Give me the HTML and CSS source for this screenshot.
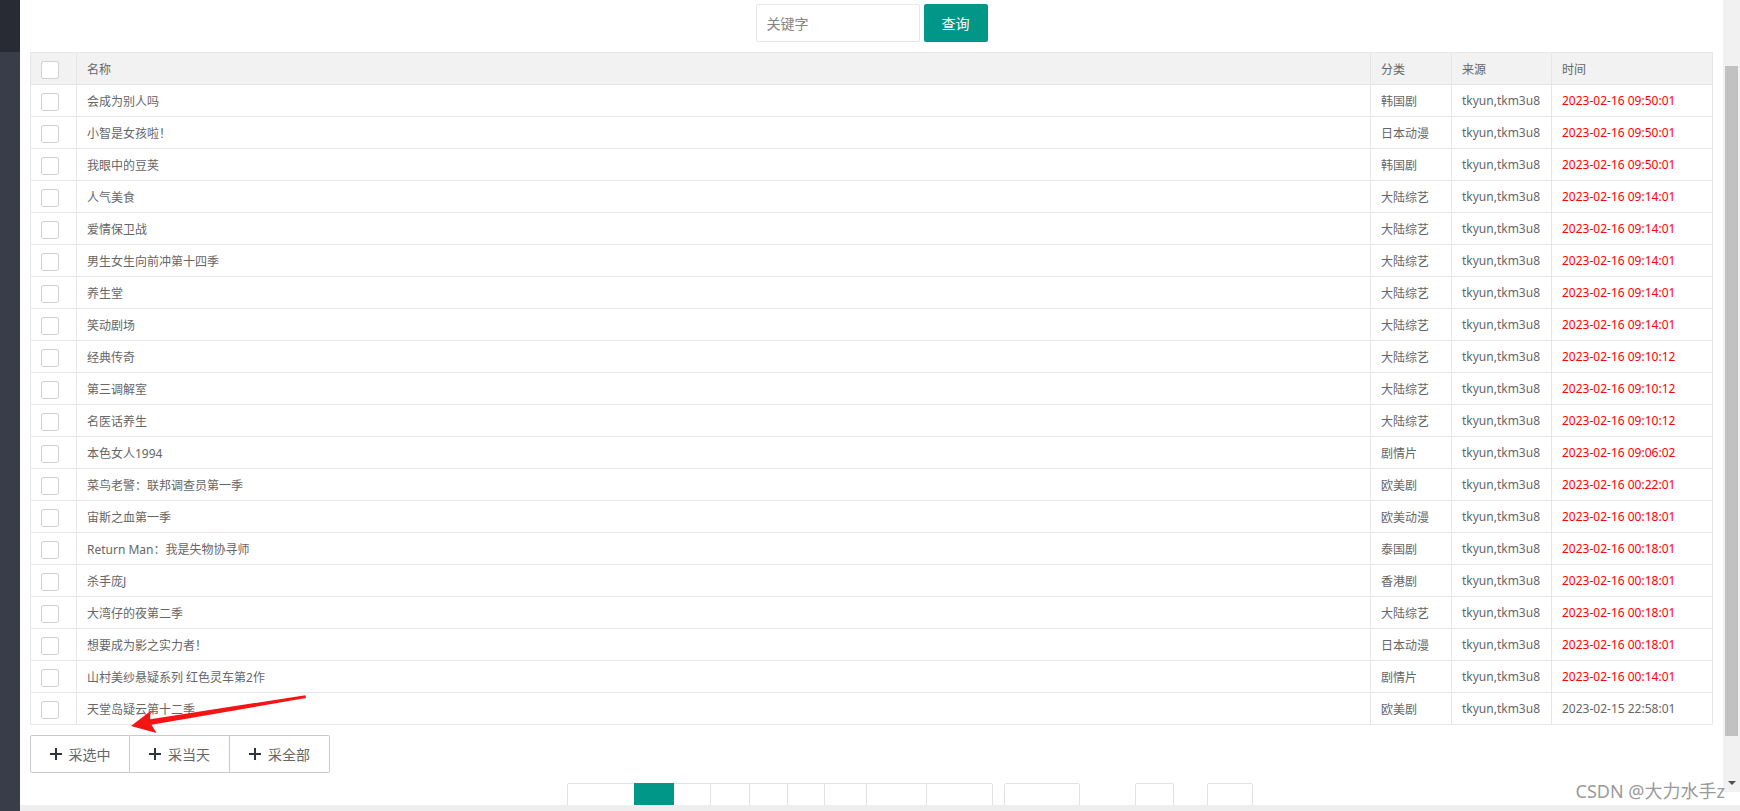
FILE: index.html
```html
<!DOCTYPE html>
<html lang="zh-CN">
<head>
    <meta charset="UTF-8">
    <title>采集列表</title>
    <link rel="stylesheet" href="styles.css">
</head>
<body>
    <div class="side"><div class="side-top"></div></div>

    <div class="wrap">
        <div class="view">
            <div class="main">
                <div class="search">
                    <input type="text" class="search-input" placeholder="关键字">
                    <button class="search-btn">查询</button>
                </div>

                <table class="grid">
                    <thead>
                        <tr>
                            <th class="col-check"><span class="check"></span></th>
                            <th>名称</th>
                            <th class="col-type">分类</th>
                            <th class="col-src">来源</th>
                            <th class="col-time">时间</th>
                        </tr>
                    </thead>
                    <tbody>
                        <tr><td><span class="check"></span></td><td>会成为别人吗</td><td>韩国剧</td><td>tkyun,tkm3u8</td><td class="new">2023-02-16 09:50:01</td></tr>
                        <tr><td><span class="check"></span></td><td>小智是女孩啦！</td><td>日本动漫</td><td>tkyun,tkm3u8</td><td class="new">2023-02-16 09:50:01</td></tr>
                        <tr><td><span class="check"></span></td><td>我眼中的豆荚</td><td>韩国剧</td><td>tkyun,tkm3u8</td><td class="new">2023-02-16 09:50:01</td></tr>
                        <tr><td><span class="check"></span></td><td>人气美食</td><td>大陆综艺</td><td>tkyun,tkm3u8</td><td class="new">2023-02-16 09:14:01</td></tr>
                        <tr><td><span class="check"></span></td><td>爱情保卫战</td><td>大陆综艺</td><td>tkyun,tkm3u8</td><td class="new">2023-02-16 09:14:01</td></tr>
                        <tr><td><span class="check"></span></td><td>男生女生向前冲第十四季</td><td>大陆综艺</td><td>tkyun,tkm3u8</td><td class="new">2023-02-16 09:14:01</td></tr>
                        <tr><td><span class="check"></span></td><td>养生堂</td><td>大陆综艺</td><td>tkyun,tkm3u8</td><td class="new">2023-02-16 09:14:01</td></tr>
                        <tr><td><span class="check"></span></td><td>笑动剧场</td><td>大陆综艺</td><td>tkyun,tkm3u8</td><td class="new">2023-02-16 09:14:01</td></tr>
                        <tr><td><span class="check"></span></td><td>经典传奇</td><td>大陆综艺</td><td>tkyun,tkm3u8</td><td class="new">2023-02-16 09:10:12</td></tr>
                        <tr><td><span class="check"></span></td><td>第三调解室</td><td>大陆综艺</td><td>tkyun,tkm3u8</td><td class="new">2023-02-16 09:10:12</td></tr>
                        <tr><td><span class="check"></span></td><td>名医话养生</td><td>大陆综艺</td><td>tkyun,tkm3u8</td><td class="new">2023-02-16 09:10:12</td></tr>
                        <tr><td><span class="check"></span></td><td>本色女人1994</td><td>剧情片</td><td>tkyun,tkm3u8</td><td class="new">2023-02-16 09:06:02</td></tr>
                        <tr><td><span class="check"></span></td><td>菜鸟老警：联邦调查员第一季</td><td>欧美剧</td><td>tkyun,tkm3u8</td><td class="new">2023-02-16 00:22:01</td></tr>
                        <tr><td><span class="check"></span></td><td>宙斯之血第一季</td><td>欧美动漫</td><td>tkyun,tkm3u8</td><td class="new">2023-02-16 00:18:01</td></tr>
                        <tr><td><span class="check"></span></td><td>Return Man：我是失物协寻师</td><td>泰国剧</td><td>tkyun,tkm3u8</td><td class="new">2023-02-16 00:18:01</td></tr>
                        <tr><td><span class="check"></span></td><td>杀手庞J</td><td>香港剧</td><td>tkyun,tkm3u8</td><td class="new">2023-02-16 00:18:01</td></tr>
                        <tr><td><span class="check"></span></td><td>大湾仔的夜第二季</td><td>大陆综艺</td><td>tkyun,tkm3u8</td><td class="new">2023-02-16 00:18:01</td></tr>
                        <tr><td><span class="check"></span></td><td>想要成为影之实力者！</td><td>日本动漫</td><td>tkyun,tkm3u8</td><td class="new">2023-02-16 00:18:01</td></tr>
                        <tr><td><span class="check"></span></td><td>山村美纱悬疑系列 红色灵车第2作</td><td>剧情片</td><td>tkyun,tkm3u8</td><td class="new">2023-02-16 00:14:01</td></tr>
                        <tr><td><span class="check"></span></td><td>天堂岛疑云第十二季</td><td>欧美剧</td><td>tkyun,tkm3u8</td><td>2023-02-15 22:58:01</td></tr>
                    </tbody>
                </table>

                <div class="actions">
                    <button class="act-btn"><svg width="12" height="12" viewBox="0 0 12 12"><path d="M6 0v12M0 6h12" stroke="#2f3440" stroke-width="2"/></svg>采选中</button>
                    <button class="act-btn"><svg width="12" height="12" viewBox="0 0 12 12"><path d="M6 0v12M0 6h12" stroke="#2f3440" stroke-width="2"/></svg>采当天</button>
                    <button class="act-btn"><svg width="12" height="12" viewBox="0 0 12 12"><path d="M6 0v12M0 6h12" stroke="#2f3440" stroke-width="2"/></svg>采全部</button>
                </div>

                <div class="pager">
                    <div class="pg-group">
                        <span class="pg w68"></span>
                        <span class="pg w40 current"></span>
                        <span class="pg w38"></span>
                        <span class="pg w40"></span>
                        <span class="pg w39"></span>
                        <span class="pg w38"></span>
                        <span class="pg w43"></span>
                        <span class="pg w61"></span>
                        <span class="pg w67"></span>
                    </div>
                    <span class="pg pg-limit"></span>
                    <span class="pg pg-input"></span>
                    <span class="pg pg-go"></span>
                </div>
            </div>

            <div class="vbar">
                <div class="vbar-track">
                    <div class="vbar-thumb"></div>
                    <div class="vbar-arrow"></div>
                </div>
            </div>
        </div>
        <div class="hbar"></div>
    </div>

    <svg class="mark" width="1740" height="811" viewBox="0 0 1740 811">
        <polygon points="131,726 156.5,733 151.5,724.8 306,698 305.4,695.2 150.2,719.2 150.5,711" fill="#f51414"/>
    </svg>

    <div class="watermark">CSDN @大力水手z</div>
</body>
</html>
```

FILE: styles.css
```css
body {
    margin: 0;
    height: 811px;
    overflow: hidden;
    display: flex;
    position: relative;
    font-family: "Noto Sans", "Noto Sans CJK SC", sans-serif;
    font-size: 12px;
    color: #666;
    background-color: #fff;
}

.side {
    width: 20px;
    background-color: #393d49;
}

.side-top {
    height: 52px;
    background-color: #282b33;
}

.wrap {
    flex: 1;
    display: flex;
    flex-direction: column;
}

.view {
    height: 805px;
    display: flex;
}

.main {
    flex: 1;
    overflow: hidden;
    padding: 0 10px;
}

.hbar {
    flex: 1;
    background-color: #eee;
}

/* fake scrollbar */
.vbar {
    width: 17px;
}

.vbar-track {
    height: 792px;
    box-sizing: border-box;
    padding-top: 66px;
    background-color: #f1f1f1;
    display: flex;
    flex-direction: column;
    align-items: center;
}

.vbar-thumb {
    width: 13px;
    height: 670px;
    background-color: #c1c1c1;
}

.vbar-arrow {
    margin-top: auto;
    margin-bottom: 7px;
    width: 0;
    height: 0;
    border-left: 4px solid transparent;
    border-right: 4px solid transparent;
    border-top: 4px solid #505050;
}

/* search */
.search {
    display: flex;
    justify-content: center;
    gap: 4px;
    padding-top: 4px;
}

.search-input {
    width: 164px;
    height: 38px;
    box-sizing: border-box;
    border: 1px solid #e6e6e6;
    border-radius: 2px;
    padding: 0 10px;
    font-family: inherit;
    font-size: 14px;
    color: #333;
    outline: none;
}

.search-input::placeholder {
    color: #858585;
}

.search-btn {
    width: 64px;
    height: 38px;
    border: none;
    border-radius: 2px;
    background-color: #009688;
    color: #fff;
    font-family: inherit;
    font-size: 14px;
    padding: 0;
}

/* table */
.grid {
    width: 100%;
    margin-top: 10px;
    table-layout: fixed;
    border-collapse: separate;
    border-spacing: 0;
    border-top: 1px solid #e6e6e6;
    border-left: 1px solid #e6e6e6;
}

.grid th,
.grid td {
    height: 31px;
    padding: 0 10px;
    border-right: 1px solid #e6e6e6;
    border-bottom: 1px solid #e6e6e6;
    text-align: left;
    font-weight: normal;
    white-space: nowrap;
    overflow: hidden;
}

.grid th {
    background-color: #f2f2f2;
}

.grid .col-check {
    width: 46px;
    box-sizing: border-box;
    padding: 0;
}

.grid .col-type {
    width: 81px;
    box-sizing: border-box;
}

.grid .col-src {
    width: 100px;
    box-sizing: border-box;
}

.grid .col-time {
    width: 161px;
    box-sizing: border-box;
}

.grid td:first-child {
    padding: 0;
}

.check {
    display: block;
    width: 18px;
    height: 18px;
    box-sizing: border-box;
    margin: 2px 0 0 10px;
    border: 1px solid #d2d2d2;
    border-radius: 2px;
    background-color: #fff;
}

.grid td.new {
    color: #f00;
}

/* action buttons */
.actions {
    display: flex;
    margin-top: 10px;
}

.act-btn {
    width: 100px;
    height: 38px;
    box-sizing: border-box;
    padding: 0;
    border: 1px solid #c9c9c9;
    background-color: #fff;
    display: flex;
    align-items: center;
    justify-content: center;
    gap: 7px;
    font-family: inherit;
    font-size: 14px;
    color: #666;
}

.act-btn + .act-btn {
    border-left: none;
}

.act-btn:first-child {
    border-radius: 2px 0 0 2px;
}

.act-btn:last-child {
    border-radius: 0 2px 2px 0;
}

/* pagination (cut off by the viewport) */
.pager {
    display: flex;
    margin-top: 10px;
    padding-left: 537px;
}

.pg-group {
    display: flex;
}

.pg {
    display: block;
    height: 28px;
    box-sizing: border-box;
    border: 1px solid #e2e2e2;
    background-color: #fff;
}

.pg-group .pg + .pg {
    margin-left: -1px;
}

.pg-group .pg:first-child {
    border-radius: 2px 0 0 2px;
}

.pg-group .pg:last-child {
    border-radius: 0 2px 2px 0;
}

.pg.current {
    background-color: #009688;
    border-color: #009688;
    position: relative;
}

.w38 { width: 38px; }
.w39 { width: 39px; }
.w40 { width: 40px; }
.w43 { width: 43px; }
.w61 { width: 61px; }
.w67 { width: 67px; }
.w68 { width: 68px; }

.pg-limit {
    width: 76px;
    margin-left: 11px;
    border-radius: 2px;
}

.pg-input {
    width: 39px;
    margin-left: 55px;
    border-radius: 2px;
}

.pg-go {
    width: 46px;
    margin-left: 33px;
    border-radius: 2px;
}

/* overlays */
.mark {
    position: absolute;
    left: 0;
    top: 0;
    pointer-events: none;
}

.watermark {
    position: absolute;
    right: 15px;
    top: 779px;
    font-family: "Noto Sans", "Noto Sans CJK SC", sans-serif;
    font-size: 18px;
    line-height: 24px;
    color: #9a9a9a;
}
```
